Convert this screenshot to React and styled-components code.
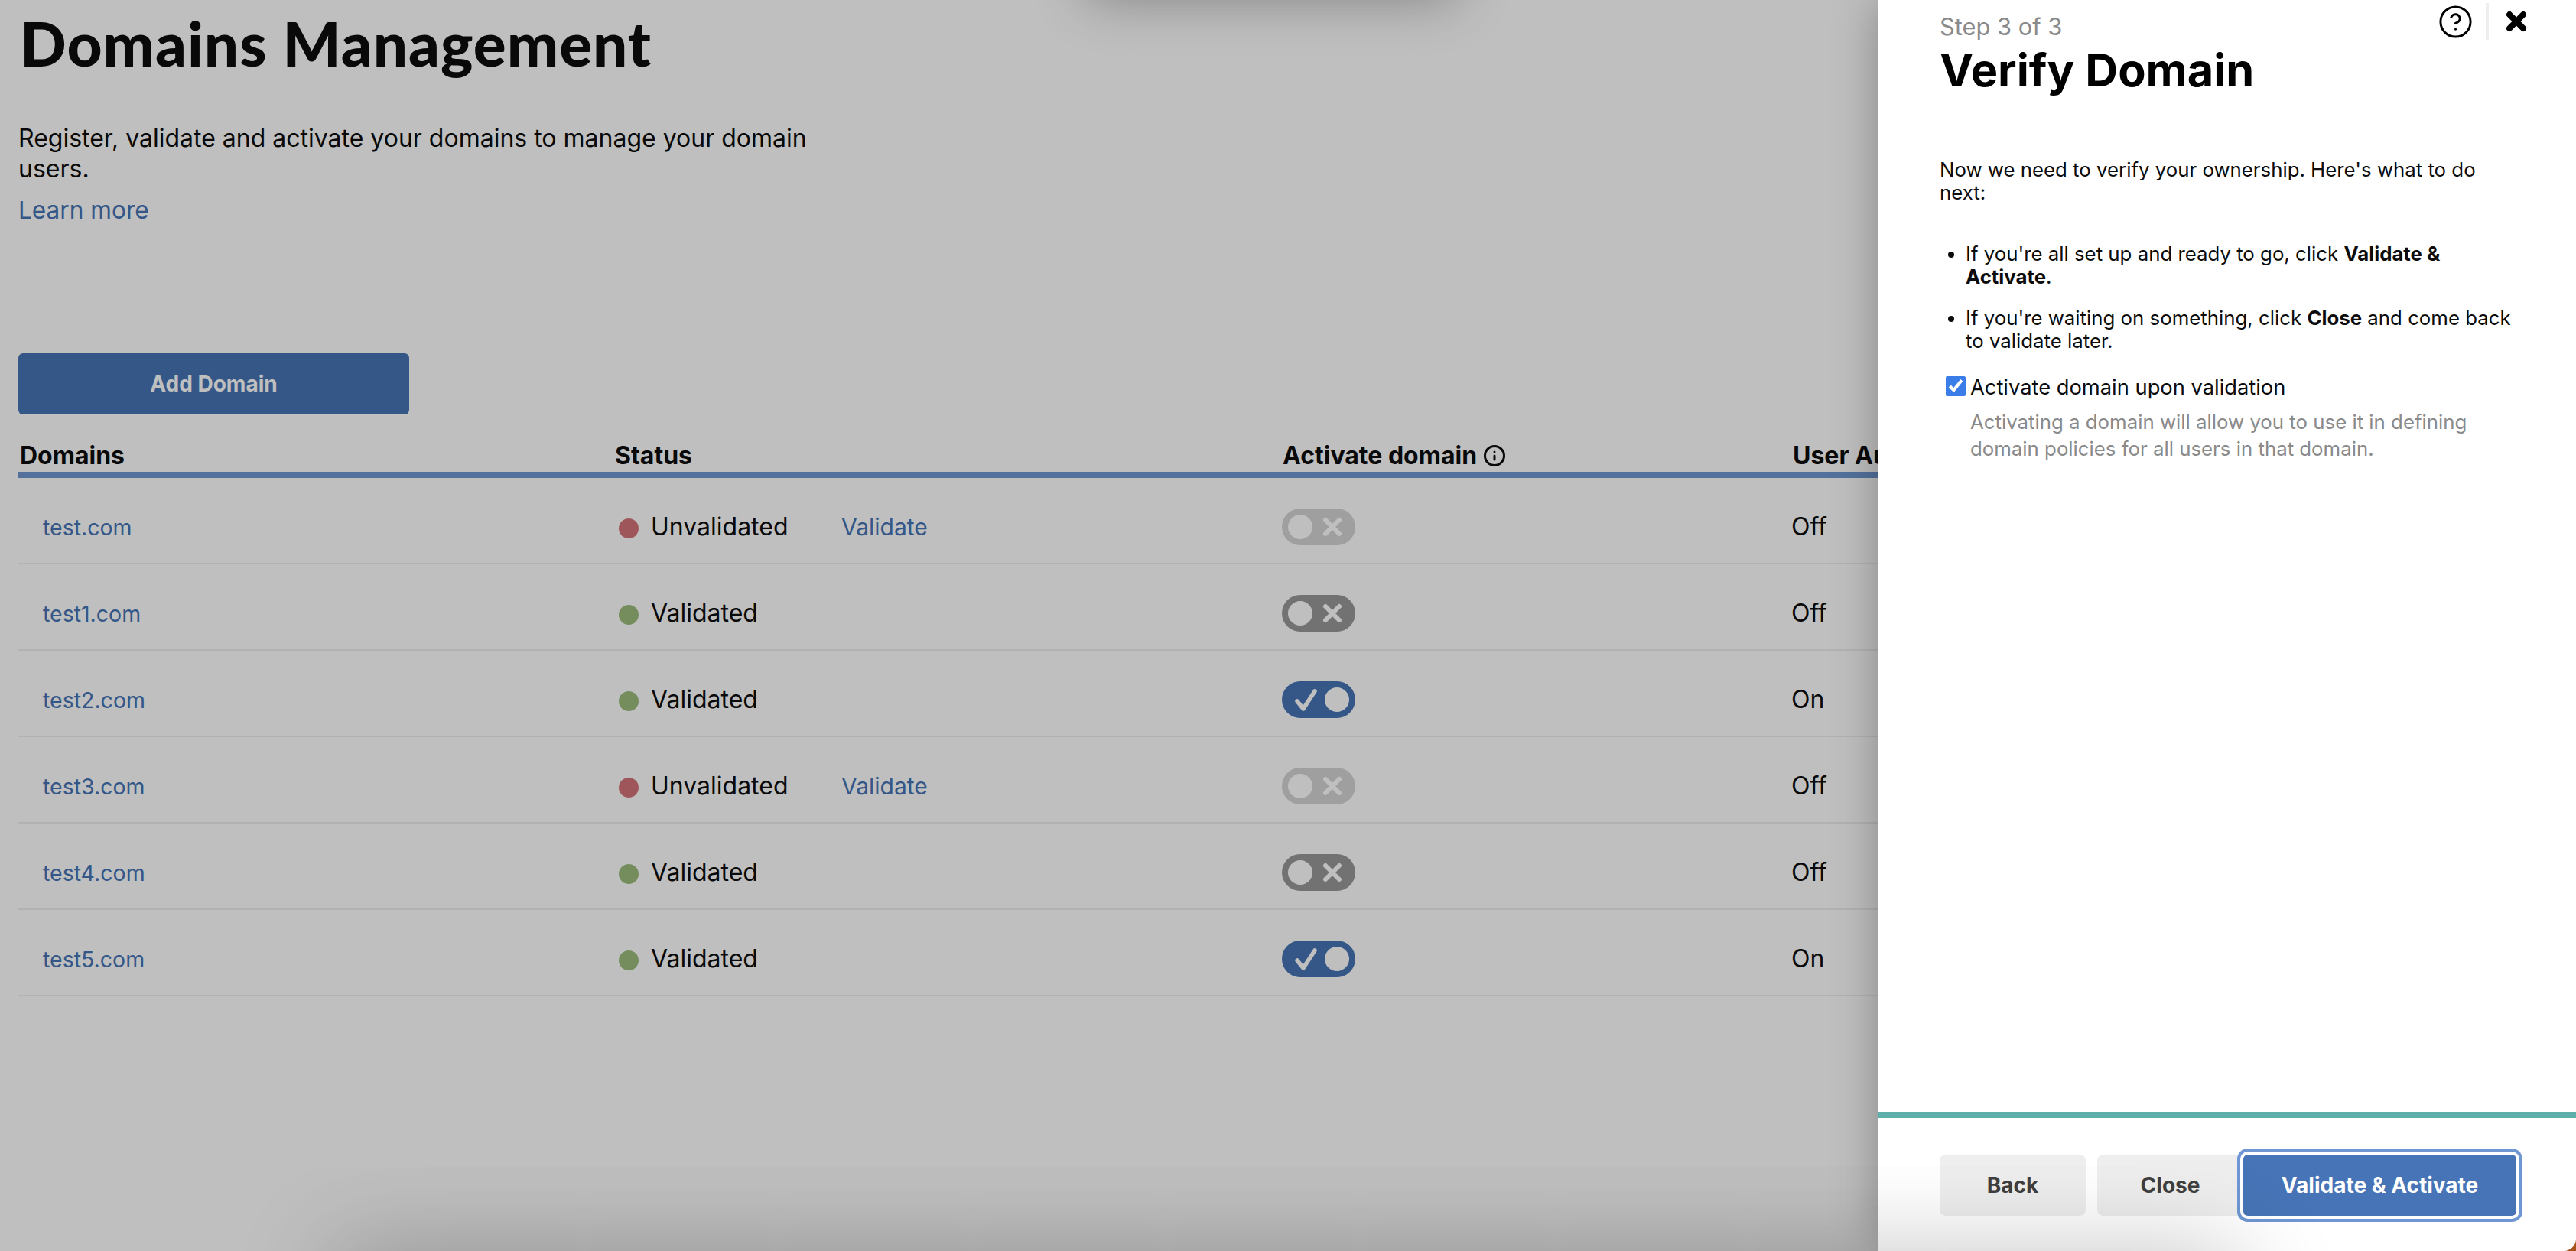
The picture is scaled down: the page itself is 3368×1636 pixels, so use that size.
import React from 'react';
import styled, { createGlobalStyle } from 'styled-components';
import { CircleHelp, Info, X } from 'lucide-react';

const GlobalStyle = createGlobalStyle`
  html, body {
    margin: 0;
    height: 100%;
    overflow: hidden;
    background: #fff;
  }
  * { box-sizing: border-box; }
`;

const Screen = styled.div`
  position: relative;
  width: 100vw;
  height: 100vh;
  overflow: hidden;
  font-family: Inter, "Liberation Sans", sans-serif;
  color: #0c0c0c;
`;

const Page = styled.main`
  padding: 11px 0 0 24px;
`;

const PageTitle = styled.h1`
  margin: 0 0 60px 2px;
  font-family: Lato, "Liberation Sans", sans-serif;
  font-size: 80px;
  font-weight: 900;
  letter-spacing: 1px;
  line-height: 90px;
`;

const Intro = styled.p`
  margin: 0 0 14px;
  max-width: 1060px;
  font-size: 32px;
  line-height: 40px;
`;

const TextLink = styled.a`
  color: #4674b6;
  font-size: ${p => p.$size || 31.6}px;
  line-height: 40px;
  cursor: pointer;
`;

const AddButton = styled.button`
  display: block;
  width: 511px;
  height: 80px;
  margin-top: 167px;
  border: 0;
  border-radius: 6px;
  background: #4674b6;
  color: #fff;
  font: 700 28px Inter, sans-serif;
`;

const Table = styled.div`
  margin-top: 34px;
  width: 2500px;
`;

const Columns = styled.div`
  display: grid;
  grid-template-columns: 778px 874px 666px 1fr;
  align-items: center;
`;

const HeadRow = styled(Columns)`
  height: 49px;
  padding-bottom: 1px;
  border-bottom: 8px solid #6f97d0;
`;

const HeadCell = styled.div`
  display: flex;
  align-items: center;
  gap: 8px;
  padding-left: ${p => p.$inset || 2}px;
  font-size: 32px;
  font-weight: 700;
  line-height: 40px;
  white-space: nowrap;
`;

const Row = styled(Columns)`
  height: 113px;
  padding-top: 16px;
  border-bottom: 2px solid #eeeeee;
`;

const DomainCell = styled.div`
  padding: 2px 0 0 32px;
`;

const StatusCell = styled.div`
  display: flex;
  align-items: center;
  font-size: 32px;
  line-height: 40px;
`;

const StatusDot = styled.span`
  flex: none;
  width: 26px;
  height: 26px;
  margin: 5px 16px 0 7px;
  border-radius: 50%;
  background: ${p => (p.$ok ? '#9dbd7d' : '#d57378')};
`;

const StatusLabel = styled.span`
  width: 249px;
`;

const Toggle = styled.div`
  display: flex;
  align-items: center;
  justify-content: space-between;
  flex-direction: ${p => (p.$on ? 'row-reverse' : 'row')};
  width: 96px;
  height: 48px;
  padding: 0 8px;
  border-radius: 24px;
  background: ${p => (p.$on ? '#4674b6' : p.$disabled ? '#d5d5d5' : '#989898')};
`;

const Knob = styled.span`
  width: 32px;
  height: 32px;
  border-radius: 50%;
  background: #fff;
`;

const ToggleGlyph = styled.svg`
  display: block;
  width: 36px;
  height: 36px;
  margin-right: ${p => p.$shift || 0}px;
  overflow: visible;
  fill: none;
  stroke: #fff;
  stroke-linecap: round;
  stroke-linejoin: round;
`;

const UserCell = styled.div`
  font-size: 32px;
  line-height: 40px;
`;

const Scrim = styled.div`
  position: absolute;
  inset: 0;
  background: rgba(0, 0, 0, 0.25);
`;

const Drawer = styled.aside`
  position: absolute;
  top: 0;
  right: 0;
  bottom: 0;
  width: 912px;
  background: #a8521f;
  box-shadow: 0 0 56px rgba(0, 0, 0, 0.3);
`;

const DrawerBody = styled.div`
  display: flex;
  flex-direction: column;
  height: 100%;
  border-bottom-right-radius: 16px;
  background: #fff;
`;

const DrawerHead = styled.header`
  display: flex;
  justify-content: space-between;
  align-items: flex-start;
  padding: 0 60px 0 80px;
`;

const StepLabel = styled.div`
  margin-top: 15px;
  color: #8a8a8a;
  font-size: 30.8px;
  line-height: 40px;
`;

const DrawerTitle = styled.h2`
  margin: 3px 0 0;
  color: #000;
  font-size: 59.4px;
  font-weight: 700;
  line-height: 66px;
`;

const HeadActions = styled.div`
  display: flex;
  align-items: center;
  height: 48px;
  margin-top: 4px;
  color: #000;
`;

const HeadDivider = styled.span`
  width: 4px;
  height: 48px;
  margin: 0 18px 0 16px;
  background: #eeeeee;
`;

const DrawerContent = styled.div`
  flex: 1;
  padding: 83px 70px 0 80px;
  color: #0c0c0c;
  font-size: 25.8px;
  line-height: 30px;
`;

const Lead = styled.p`
  margin: 0 0 50px;
`;

const Steps = styled.ul`
  margin: 0;
  padding: 0 0 0 34px;
`;

const Step = styled.li`
  margin-bottom: 24px;
  &:last-child {
    margin-bottom: 30px;
  }
`;

const CheckLine = styled.label`
  display: flex;
  align-items: center;
  gap: 6px;
  padding-left: 8px;
  font-size: 27.3px;
  line-height: 32px;
`;

const CheckBox = styled.input`
  flex: none;
  width: 26px;
  height: 26px;
  margin: -4px 0 0;
  accent-color: #3b7de8;
`;

const Hint = styled.p`
  margin: 11px 0 0;
  padding-left: 40px;
  color: #8a8a8a;
  font-size: 25.8px;
  line-height: 35px;
`;

const DrawerFoot = styled.footer`
  display: flex;
  height: 182px;
  padding: 48px 0 0 80px;
  border-top: 8px solid #5eafa9;
`;

const FootGroup = styled.div`
  display: flex;
  gap: 15px;
`;

const GhostButton = styled.button`
  width: 191px;
  height: 80px;
  border: 0;
  border-radius: 8px;
  background: #eeeeee;
  color: #3f3f3f;
  font: 700 28px Inter, sans-serif;
`;

const PrimaryButton = styled.button`
  width: 357px;
  height: 80px;
  border: 0;
  border-radius: 6px;
  background: #4674b6;
  box-shadow: 0 0 0 4px #fff, 0 0 0 8px #6e97d3;
  color: #fff;
  font: 700 28px Inter, sans-serif;
`;

/* ombres de la barre et du menu coupes par la fenetre */
const CutShadow = styled.div`
  position: absolute;
  pointer-events: none;
  background: transparent;
  ${p => (p.$top
    ? 'top: -100px; left: 1420px; width: 485px; height: 98px; box-shadow: 0 0 70px rgba(0,0,0,0.32);'
    : 'top: 1644px; left: 440px; width: 2485px; height: 100px; box-shadow: 0 0 130px rgba(0,0,0,0.28);')}
`;

const domains = [
  { name: 'test.com', ok: false, state: 'disabled', user: 'Off' },
  { name: 'test1.com', ok: true, state: 'off', user: 'Off' },
  { name: 'test2.com', ok: true, state: 'on', user: 'On' },
  { name: 'test3.com', ok: false, state: 'disabled', user: 'Off' },
  { name: 'test4.com', ok: true, state: 'off', user: 'Off' },
  { name: 'test5.com', ok: true, state: 'on', user: 'On' },
];

const DomainToggle = ({ state }) => (
  <Toggle $on={state === 'on'} $disabled={state === 'disabled'}>
    <Knob />
    {state === 'on' ? (
      <ToggleGlyph viewBox="0 0 36 36" strokeWidth="5.5">
        <path d="M12 20 L20 30 L35 7" />
      </ToggleGlyph>
    ) : (
      <ToggleGlyph viewBox="0 0 36 36" strokeWidth="6" $shift={4}>
        <path d="M9 9 L27 27 M27 9 L9 27" />
      </ToggleGlyph>
    )}
  </Toggle>
);

export default function App() {
  return (
    <Screen>
      <GlobalStyle />
      <Page>
        <PageTitle>Domains Management</PageTitle>
        <Intro>Register, validate and activate your domains to manage your domain users.</Intro>
        <TextLink>Learn more</TextLink>
        <AddButton>Add Domain</AddButton>
        <Table>
          <HeadRow>
            <HeadCell>Domains</HeadCell>
            <HeadCell>Status</HeadCell>
            <HeadCell $inset={1}>
              Activate domain <Info size={30} strokeWidth={2.4} />
            </HeadCell>
            <HeadCell>User Authentication</HeadCell>
          </HeadRow>
          {domains.map(d => (
            <Row key={d.name}>
              <DomainCell>
                <TextLink $size={28.5}>{d.name}</TextLink>
              </DomainCell>
              <StatusCell>
                <StatusDot $ok={d.ok} />
                <StatusLabel>{d.ok ? 'Validated' : 'Unvalidated'}</StatusLabel>
                {!d.ok && <TextLink $size={30}>Validate</TextLink>}
              </StatusCell>
              <DomainToggle state={d.state} />
              <UserCell>{d.user}</UserCell>
            </Row>
          ))}
        </Table>
      </Page>
      <Scrim />
      <Drawer>
        <DrawerBody>
          <DrawerHead>
            <div>
              <StepLabel>Step 3 of 3</StepLabel>
              <DrawerTitle>Verify Domain</DrawerTitle>
            </div>
            <HeadActions>
              <CircleHelp size={47} strokeWidth={1.5} />
              <HeadDivider />
              <X size={36} strokeWidth={5.3} />
            </HeadActions>
          </DrawerHead>
          <DrawerContent>
            <Lead>Now we need to verify your ownership. Here's what to do next:</Lead>
            <Steps>
              <Step>If you're all set up and ready to go, click <b>Validate &amp; Activate</b>.</Step>
              <Step>If you're waiting on something, click <b>Close</b> and come back to validate later.</Step>
            </Steps>
            <CheckLine>
              <CheckBox type="checkbox" defaultChecked />
              Activate domain upon validation
            </CheckLine>
            <Hint>Activating a domain will allow you to use it in defining domain policies for all users in that domain.</Hint>
          </DrawerContent>
          <DrawerFoot>
            <FootGroup>
              <GhostButton>Back</GhostButton>
              <GhostButton>Close</GhostButton>
            </FootGroup>
            <PrimaryButton>Validate &amp; Activate</PrimaryButton>
          </DrawerFoot>
        </DrawerBody>
      </Drawer>
      <CutShadow $top />
      <CutShadow />
    </Screen>
  );
}
